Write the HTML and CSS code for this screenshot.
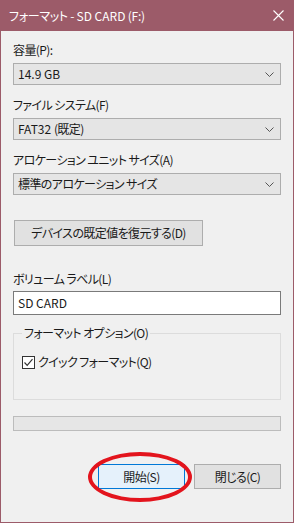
FILE: index.html
```html
<html>
    <head>
        <title>フォーマット - SD CARD (F:)</title>
        <link rel="stylesheet" href="styles.css">
    </head>
    <body>
        <div class="window">
            <div class="titlebar">
                <span class="title">フォーマット - <span class="latin">SD CARD</span> (F:)</span>
                <svg class="close" width="11" height="11" viewBox="0 0 11 11">
                    <path d="M0.5 0.5 L10.5 10.5 M10.5 0.5 L0.5 10.5" stroke="#fff" stroke-width="1.1" fill="none"/>
                </svg>
            </div>
            <div class="content">
                <label class="field-label first">容量(P):</label>
                <div class="combo">
                    <span class="latin">14.9 GB</span>
                    <svg class="chevron" width="9" height="5" viewBox="0 0 9 5"><path d="M0.5 0.5 L4.5 4.5 L8.5 0.5" stroke="#555" fill="none"/></svg>
                </div>

                <label class="field-label">ファイル システム(F)</label>
                <div class="combo">
                    <span><span class="latin">FAT32 </span>(既定)</span>
                    <svg class="chevron" width="9" height="5" viewBox="0 0 9 5"><path d="M0.5 0.5 L4.5 4.5 L8.5 0.5" stroke="#555" fill="none"/></svg>
                </div>

                <label class="field-label">アロケーション ユニット サイズ(A)</label>
                <div class="combo">
                    <span>標準のアロケーション サイズ</span>
                    <svg class="chevron" width="9" height="5" viewBox="0 0 9 5"><path d="M0.5 0.5 L4.5 4.5 L8.5 0.5" stroke="#555" fill="none"/></svg>
                </div>

                <button class="btn restore">デバイスの既定値を復元する(D)</button>

                <label class="field-label volume">ボリューム ラベル(L)</label>
                <div class="textbox latin">SD CARD</div>

                <fieldset class="options">
                    <legend>フォーマット オプション(O)</legend>
                    <div class="check-row">
                        <span class="checkbox">
                            <svg width="11" height="11" viewBox="0 0 11 11"><path d="M1.5 5.5 L4.2 8.3 L9.5 2.2" stroke="#333" stroke-width="1.2" fill="none"/></svg>
                        </span>
                        <span>クイック フォーマット(Q)</span>
                    </div>
                </fieldset>

                <div class="progress"></div>

                <div class="actions">
                    <button class="btn default">開始(S)</button>
                    <button class="btn">閉じる(C)</button>
                </div>
            </div>
            <div class="mark"></div>
        </div>
    </body>
</html>
```
FILE: styles.css
```css
body {
    margin: 0;
    font-family: "Noto Sans CJK JP", "Noto Sans", sans-serif;
    font-size: 12px;
    font-feature-settings: "palt";
    letter-spacing: -0.6px;
    color: #1a1a1a;
}

.latin {
    letter-spacing: 0;
}

.window {
    position: relative;
    width: 294px;
    height: 523px;
    box-sizing: border-box;
    background: #f0f0f0;
    border: 1px solid #9c5b69;
    border-top: none;
}

.titlebar {
    height: 31px;
    margin: 0 -1px;
    background: #9c5b69;
    color: #fff;
    display: flex;
    align-items: center;
    justify-content: space-between;
    padding: 0 10px 0 9px;
}

.title {
    line-height: 16px;
    margin-top: 1px;
    letter-spacing: -0.3px;
}

.content {
    padding: 11px 12px 0 12px;
    display: flex;
    flex-direction: column;
}

.field-label {
    display: block;
    line-height: 16px;
    margin-top: 12px;
}

.field-label.first {
    margin-top: 0;
}

.combo {
    margin-top: 5px;
    height: 22px;
    box-sizing: border-box;
    border: 1px solid #adadad;
    background: #e5e5e5;
    display: flex;
    align-items: center;
    justify-content: space-between;
    padding: 0 5px 0 4px;
    line-height: 16px;
}

.chevron {
    margin-right: 1px;
}

.btn {
    font-family: inherit;
    font-size: 12px;
    font-feature-settings: "palt";
    letter-spacing: -0.6px;
    color: #1a1a1a;
    background: #e1e1e1;
    border: 1px solid #adadad;
    border-radius: 0;
    padding: 0;
    height: 25px;
    width: 87px;
    line-height: 16px;
}

.restore {
    margin-top: 25px;
    margin-left: 1px;
    width: 189px;
    height: 26px;
    align-self: flex-start;
}

.volume {
    margin-top: 25px;
}

.textbox {
    margin-top: 4px;
    height: 24px;
    box-sizing: border-box;
    border: 1px solid #7a7a7a;
    background: #fff;
    padding: 0 4px;
    line-height: 22px;
}

.options {
    margin: 10px 0 0 0;
    padding: 0 0 29px 8px;
    border: 1px solid #dcdcdc;
}

.options legend {
    padding: 0 2px;
    line-height: 16px;
}

.check-row {
    margin-top: 13px;
    display: flex;
    align-items: center;
    gap: 3px;
    line-height: 16px;
}

.checkbox {
    width: 13px;
    height: 13px;
    box-sizing: border-box;
    border: 1px solid #333;
    background: #fff;
    display: flex;
    align-items: center;
    justify-content: center;
}

.progress {
    margin-top: 16px;
    height: 15px;
    box-sizing: border-box;
    border: 1px solid #bcbcbc;
    background: #e6e6e6;
}

.actions {
    margin-top: 33px;
    display: flex;
    justify-content: flex-end;
    gap: 9px;
}

.btn.default {
    background: #e5f1fb;
    border-color: #0078d7;
}

/* red hand-drawn ring over the start button */
.mark {
    position: absolute;
    left: 87px;
    top: 452px;
    width: 104px;
    height: 50px;
    box-sizing: border-box;
    border: 4px solid #e3141d;
    border-radius: 50%;
}
```
